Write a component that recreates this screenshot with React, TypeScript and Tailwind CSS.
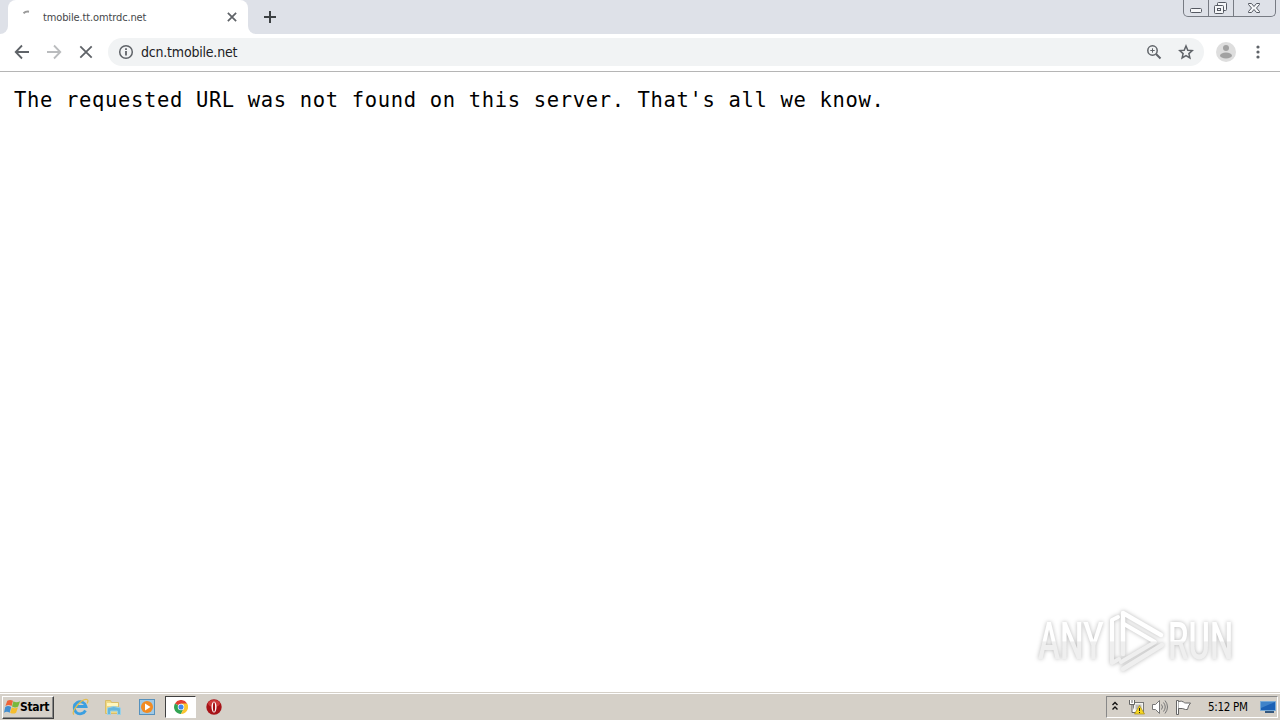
import type { ReactNode } from "react";

type IconProps = {
  children: ReactNode;
  className?: string;
};

function StrokeIcon({ children, className = "h-4 w-4" }: IconProps) {
  return (
    <svg viewBox="0 0 16 16" fill="none" stroke="currentColor" strokeWidth="1.8" className={`shrink-0 ${className}`}>
      {children}
    </svg>
  );
}

function TabStrip() {
  return (
    <div className="flex h-[34px] bg-[#dee1e8]">
      <div className="h-full w-2 bg-white">
        <div className="h-full rounded-br-lg bg-[#dee1e8]" />
      </div>
      <div className="flex h-full w-60 items-center rounded-t-lg bg-white pr-2.5 pl-3">
        <svg viewBox="0 0 16 16" className="mr-[7px] h-4 w-4 shrink-0" fill="none" stroke="#999" strokeWidth="2">
          <path d="M3.5 4.3Q5.8 2.2 9 2.7" />
        </svg>
        <span className="flex-1 pt-px text-[11px] leading-[14px] tracking-[-0.13px] text-[#45474a]">tmobile.tt.omtrdc.net</span>
        <StrokeIcon className="h-3 w-3 text-[#5f6368]">
          <path d="M2.5 2.5l11 11M13.5 2.5l-11 11" strokeWidth="2.3" />
        </StrokeIcon>
      </div>
      <div className="h-full w-2 bg-white">
        <div className="h-full rounded-bl-lg bg-[#dee1e8]" />
      </div>
      <div className="flex items-center pl-1.5">
        <StrokeIcon className="h-4 w-4 text-[#3c4043]">
          <path d="M8 2v12M2 8h12" strokeWidth="2" />
        </StrokeIcon>
      </div>
      <div className="mr-1 ml-auto flex h-[17px] rounded-b-[5px] border border-t-0 border-[#777b83] text-[#555962]">
        <div className="w-[25px] border-r border-[#777b83]">
          <svg viewBox="0 0 24 16" className="h-4 w-6" fill="#f5f6f8" stroke="currentColor">
            <rect x="6.5" y="8.5" width="11" height="4" rx="1" />
          </svg>
        </div>
        <div className="w-[25px] border-r border-[#777b83]">
          <svg viewBox="0 0 24 16" className="h-4 w-6" fill="#f5f6f8" stroke="currentColor">
            <rect x="8.5" y="2.5" width="9" height="8" rx="1" />
            <rect x="5.5" y="5.5" width="9" height="8" rx="1" />
            <rect x="8.5" y="8.5" width="3" height="2" />
          </svg>
        </div>
        <svg viewBox="0 0 41 16" className="h-4 w-[41px]" fill="#f5f6f8" stroke="currentColor">
          <path d="M14.5 3.5h3l2.5 3 2.5-3h3v1l-3 3.5 3 3.5v1h-3l-2.5-3-2.5 3h-3v-1l3-3.5-3-3.5z" />
        </svg>
      </div>
    </div>
  );
}

function Toolbar() {
  return (
    <div className="flex h-[38px] items-center border-b border-[#b5b5b5] bg-white pb-px pl-3.5">
      <div className="flex gap-4 text-[#5f6368]">
        <StrokeIcon>
          <path d="M15 8H2M8 1.5L1.7 8 8 14.5" />
        </StrokeIcon>
        <StrokeIcon className="h-4 w-4 text-[#babcbe]">
          <path d="M1 8h13M8 1.5L14.3 8 8 14.5" />
        </StrokeIcon>
        <StrokeIcon>
          <path d="M2.3 2.3l11.4 11.4M13.7 2.3L2.3 13.7" />
        </StrokeIcon>
      </div>
      <div className="ml-3.5 flex h-7 w-[1096px] items-center rounded-full bg-[#f1f3f4] px-2.5 text-[#5f6368]">
        <StrokeIcon>
          <circle cx="8" cy="8" r="6.3" strokeWidth="1.5" />
          <path d="M8 7v4.5M8 4.3v1.6" />
        </StrokeIcon>
        <span className="ml-[7px] flex-1 text-[14px] leading-4 tracking-[-0.2px] text-[#202124]">dcn.tmobile.net</span>
        <StrokeIcon>
          <circle cx="6.5" cy="6.5" r="4.7" strokeWidth="1.5" />
          <path d="M10 10l4.5 4.5" strokeWidth="2" />
          <path d="M6.5 4.3v4.4M4.3 6.5h4.4" strokeWidth="1" />
        </StrokeIcon>
        <StrokeIcon className="ml-4 h-4 w-4">
          <path d="M8 2l1.8 4.2 4.5.4-3.4 3 1 4.4L8 11.700 4.100 14l1-4.400-3.400-3 4.500-.4z" strokeWidth="1.5" />
        </StrokeIcon>
      </div>
      <svg viewBox="0 0 20 20" className="ml-3 h-5 w-5">
        <circle cx="10" cy="10" r="10" fill="#dedede" />
        <circle cx="10" cy="6" r="3" fill="#a2a2a2" />
        <ellipse cx="10" cy="13.5" rx="6" ry="3" fill="#a2a2a2" />
      </svg>
      <svg viewBox="0 0 4 14" className="ml-5 h-3.5 w-1" fill="#5f6368">
        <circle cx="2" cy="2" r="1.6" />
        <circle cx="2" cy="7" r="1.6" />
        <circle cx="2" cy="12" r="1.6" />
      </svg>
    </div>
  );
}

function Watermark() {
  return (
    <div className="absolute top-[605px] left-[1036px] h-[70px] w-[204px]">
      <svg viewBox="0 0 204 70" className="h-full w-full overflow-visible drop-shadow-[0_0_2px_#b8b8b8]">
        <defs>
          <linearGradient id="fade" x1="0" y1="0" x2="0" y2="70" gradientUnits="userSpaceOnUse">
            <stop offset="0.51" stopColor="#fff" />
            <stop offset="0.53" stopColor="#efefef" />
          </linearGradient>
          {/* same split as "fade", measured from the text baseline */}
          <linearGradient id="textFade" x1="0" y1="-54" x2="0" y2="16" gradientUnits="userSpaceOnUse">
            <stop offset="0.51" stopColor="#fff" />
            <stop offset="0.53" stopColor="#efefef" />
          </linearGradient>
        </defs>
        <g fill="url(#textFade)" fontFamily="Roboto" fontWeight="500" fontSize="52">
          <text transform="translate(2 54) scale(.64 1)">ANY</text>
          <text transform="translate(132 54) scale(.63 1)">RUN</text>
        </g>
        <g fill="none" stroke="url(#fade)" strokeWidth="4.5" strokeLinecap="round" strokeLinejoin="round">
          <path d="M87 49V8l38 22" />
          <path d="M88 19l31 18-34 20" strokeWidth="4" />
          <path d="M82 12l-6 3v43l7-4" strokeWidth="4" />
          <path d="M87 64l39-24" />
        </g>
      </svg>
    </div>
  );
}

function Taskbar() {
  return (
    <div className="border-t border-[#d5d0c8]">
      <div className="flex h-[27px] items-center border-t border-white bg-[#d5d0c8] text-black">
        <div className="ml-0.5 flex h-[23px] w-[52px] items-center border border-t-white border-r-[#404040] border-b-[#404040] border-l-white shadow-[inset_-1px_-1px_#888]">
          <svg viewBox="0 0 18 16" className="ml-px h-4 w-[17px] shrink-0">
            <path d="M3.5 1.5q3-2 6 0L8 7Q5 5 1.500 7z" fill="#ee6338" />
            <path d="M10 2q3 2 7 0l-2 5.5q-3 2-6.5 0z" fill="#78b83c" />
            <path d="M1.3 8q3-2 6.300 0L6 14Q3 12 0 14z" fill="#438ed0" />
            <path d="M8.3 8.3q3 2 6.500 0l-2 5.700q-3 2-6.300 0z" fill="#f5bd2d" />
          </svg>
          <span className="-ml-px text-[12px] leading-4 font-bold tracking-[-0.35px] whitespace-nowrap">Start</span>
        </div>
        <svg viewBox="0 0 18 18" className="ml-[17px] h-[18px] w-[18px]" fill="none">
          <path d="M14.5 12.5a6 6 0 1 1 .5-4H4.5" stroke="#3b9fe0" strokeWidth="2.8" />
          <path d="M3 16.5C-1 14 11 0 16 1.500c1.500.5 1 2.500 0 4" stroke="#e3bd4c" strokeWidth="1.2" />
        </svg>
        <svg viewBox="0 0 18 18" className="ml-[15px] h-[18px] w-[18px]">
          <path d="M1.5 2.5h5l1 2h7v11h-13z" fill="#efd883" stroke="#d9bd69" />
          <path d="M3 5h11v3H3z" fill="#fff6bd" />
          <path d="M3.5 16.500V10q6-3 13 0v6.500h-3V13h-7v3.500z" fill="#65b6dc" stroke="#98d1e8" />
        </svg>
        <svg viewBox="0 0 16 16" className="ml-[17px] h-4 w-4">
          <rect x=".5" y=".5" width="15" height="15" fill="#a0c9e5" stroke="#5691bd" />
          <circle cx="8" cy="8" r="6" fill="#f28b22" />
          <path d="M6 4.5v7l5.500-3.500z" fill="#fff" />
        </svg>
        <div className="ml-2.5 flex h-[22px] w-[31px] items-center justify-center border border-t-[#404040] border-r-white border-b-white border-l-[#404040] bg-white">
          <svg viewBox="0 0 16 16" className="h-3.5 w-3.5">
            <path d="M8 8L1.100 4A8 8 0 0 1 15 4z" fill="#e34032" />
            <path d="M8 8L1.100 4A8 8 0 0 0 8 16l3-6z" fill="#32a453" />
            <path d="M8 4h7a8 8 0 0 1-7 12l3-6z" fill="#fbc52f" />
            <circle cx="8" cy="8" r="3.7" fill="#fff" />
            <circle cx="8" cy="8" r="2.9" fill="#4286ed" />
          </svg>
        </div>
        <svg viewBox="0 0 16 16" className="ml-2.5 h-4 w-4">
          <circle cx="8" cy="8" r="7.7" fill="#a71318" />
          <ellipse cx="8" cy="4.5" rx="6" ry="3.5" fill="#ce3a3a" />
          <ellipse cx="8" cy="8" rx="2.5" ry="5.5" fill="#fff" />
          <ellipse cx="8" cy="8" rx="1.1" ry="4.8" fill="#a60e13" />
        </svg>
        <div className="mr-0.5 ml-auto flex h-[22px] w-[172px] items-center border border-t-[#888] border-r-white border-b-white border-l-[#888]">
          <svg viewBox="0 0 8 10" className="mb-0.5 ml-1 h-2.5 w-2" fill="none" stroke="#111" strokeWidth="1.4">
            <path d="M1.5 4L4 1.500 6.500 4M1.500 8.500L4 6l2.500 2.500" />
          </svg>
          <svg viewBox="0 0 18 16" className="ml-[9px] h-4 w-[18px]">
            <rect x="5.5" y="3.5" width="10" height="10" fill="#f4f4ef" stroke="#777" />
            <rect x="7.5" y="5.5" width="6" height="5" fill="#bbb" />
            <path d="M1.500 1v4.500h5V1M4 1v3M4 5.500v8h3" fill="#fff" stroke="#666" />
            <path d="M11.500 6.500l5 8.500h-10z" fill="#f6d621" stroke="#a78c18" strokeWidth=".7" />
            <path d="M11.500 9v3m0 1v1" stroke="#222" />
          </svg>
          <svg viewBox="0 0 18 16" className="ml-[5px] h-4 w-[18px]" fill="none" stroke="#777">
            <path d="M1.500 5.500h3l4-4v13l-4-4h-3z" fill="#fff" />
            <path d="M10.500 5.500q2 2.500 0 5M12.500 3.500q3.500 4.500 0 9M14 1.500q5 6.500 0 13" />
          </svg>
          <svg viewBox="0 0 18 16" className="ml-1.5 h-4 w-[18px]" fill="#fff" stroke="#666">
            <path d="M1.500 1.500h2v14h-2z" />
            <path d="M3.500 2.500q3-1 5 .5 1 1 2 1h5l-2 3-1 3.500h-2q-3-1.500-7-1" />
          </svg>
          <span className="ml-[15px] text-[11.5px] leading-4 tracking-[-0.3px] whitespace-nowrap">5:12 PM</span>
          <svg viewBox="0 0 16 14" className="mr-px ml-auto h-3.5 w-4">
            <path d="M.5 1.500h15v9H.5z" fill="#1b61b5" stroke="#76a9d6" />
            <path d="M1 2h14L1 8z" fill="#3f83c9" />
            <path d="M5 12h9" stroke="#35587e" strokeWidth="2" />
          </svg>
        </div>
      </div>
    </div>
  );
}

export default function App() {
  return (
    <div className="flex h-[720px] w-[1280px] flex-col overflow-hidden bg-white font-['DejaVu_Sans_Condensed','DejaVu_Sans',sans-serif]">
      <TabStrip />
      <Toolbar />
      <main className="flex-1 px-3.5 pt-4">
        <p className="font-['DejaVu_Sans_Mono',monospace] text-[20.5px] leading-6 tracking-[0.65px] whitespace-nowrap text-black">
          The requested URL was not found on this server. That's all we know.
        </p>
      </main>
      <Watermark />
      <Taskbar />
    </div>
  );
}
